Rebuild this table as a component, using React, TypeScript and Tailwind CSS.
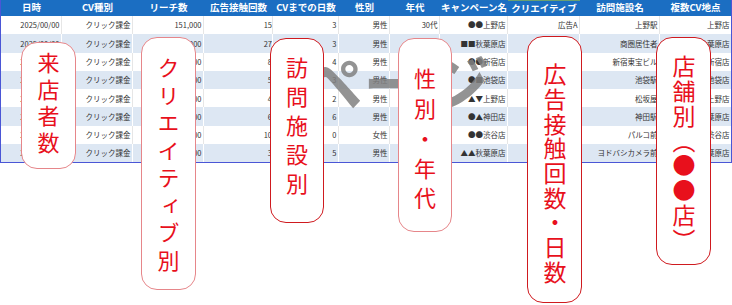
import React from "react";

const cols = [
  { w: "w-[61px]", label: "日時" },
  { w: "w-[71px]", label: "CV種別" },
  { w: "w-[71px]", label: "リーチ数" },
  { w: "w-[69px]", label: "広告接触回数" },
  { w: "w-[66px]", label: "CVまでの日数" },
  { w: "w-[51px]", label: "性別" },
  { w: "w-[50px]", label: "年代" },
  { w: "w-[68px]", label: "キャンペーン名" },
  { w: "w-[72px]", label: "クリエイティブ" },
  { w: "w-[80px]", label: "訪問施設名" },
  { w: "w-[71px]", label: "複数CV地点" },
];

const rows: string[][] = [
  ["2025/00/00", "クリック課金", "151,000", "15", "3", "男性", "30代", "●●上野店", "広告A", "上野駅", "上野店"],
  ["2025/00/00", "クリック課金", "120,000", "27", "3", "男性", "20代", "■■秋葉原店", "広告B", "商圏居住者", "秋葉原店"],
  ["2025/00/00", "クリック課金", "98,000", "8", "4", "男性", "40代", "●●新宿店", "広告A", "新宿東宝ビル", "新宿店"],
  ["2025/00/00", "クリック課金", "87,000", "5", "3", "男性", "30代", "●■池袋店", "広告C", "池袋駅", "池袋店"],
  ["2025/00/00", "クリック課金", "76,000", "4", "2", "男性", "50代", "▲▼上野店", "広告B", "松坂屋", "上野店"],
  ["2025/00/00", "クリック課金", "65,000", "6", "6", "男性", "20代", "●▲神田店", "広告A", "神田駅", "秋葉原店"],
  ["2025/00/00", "クリック課金", "54,000", "10", "0", "女性", "30代", "●●渋谷店", "広告C", "パルコ前", "渋谷店"],
  ["2025/00/00", "クリック課金", "43,000", "3", "5", "男性", "40代", "▲▲秋葉原店", "広告B", "ヨドバシカメラ前", "秋葉原店"],
];

type Callout = {
  text: string;
  box: string;
  border: string;
  pad: string;
  type: string;
};

const callouts: Callout[] = [
  { text: "来店者数", box: "left-[21px] top-[42px] w-[55px] h-[127px]", border: "border-[#e6868a]", pad: "pt-[8.5px]", type: "text-[22px] tracking-[4.5px]" },
  { text: "クリエイティブ別", box: "left-[141px] top-[37px] w-[55px] h-[253px]", border: "border-[#e6868a]", pad: "pt-[18.5px]", type: "text-[22px] tracking-[5.5px]" },
  { text: "訪問施設別", box: "left-[270px] top-[38px] w-[54px] h-[185px]", border: "border-[#cf1a1f]", pad: "pt-[18px]", type: "text-[22px] tracking-[7px]" },
  { text: "性別・年代", box: "left-[398px] top-[38px] w-[54px] h-[194px]", border: "border-[#e6868a]", pad: "pt-[28.5px]", type: "text-[22px] tracking-[7.75px]" },
  { text: "広告接触回数・日数", box: "left-[527px] top-[36px] w-[55px] h-[267px]", border: "border-[#cf1a1f]", pad: "pt-[26px]", type: "text-[23px] tracking-[1.7px]" },
  { text: "店舗別（●●店）", box: "left-[656px] top-[37px] w-[55px] h-[228px]", border: "border-[#cf1a1f]", pad: "pt-[17px]", type: "text-[23px] tracking-[1.8px]" },
];

export default function App() {
  return (
    <div className="relative w-[732px] h-[305px] bg-white overflow-hidden font-['Noto_Sans_CJK_JP','Noto_Sans',sans-serif]">
      <div className="flex w-[732px] flex-col border-x border-b border-[#4a56d6]">
        <div className="flex h-[16px] bg-[#1b6ec2]">
          {cols.map((c, i) => (
            <div
              key={i}
              className={`${c.w} shrink-0 flex items-center justify-center text-[9.5px] font-bold text-white leading-none ${i === 8 ? "border-t border-[#6aa070]" : ""}`}
            >
              {c.label}
            </div>
          ))}
        </div>
        {rows.map((r, ri) => (
          <div key={ri} className={`flex h-[18.3px] ${ri % 2 === 1 ? "bg-[#dde7f3]" : "bg-white"}`}>
            {r.map((v, ci) => (
              <div
                key={ci}
                className={`${cols[ci].w} shrink-0 flex items-center justify-end ${ci === 3 ? "pr-0" : "pr-[1.5px]"} text-[7.5px] text-[#333333] leading-none whitespace-nowrap overflow-hidden ${ci < 10 ? "border-r" : ""} ${ri % 2 === 1 ? "border-white" : "border-[#e6e6e6]"}`}
              >
                {v}
              </div>
            ))}
          </div>
        ))}
      </div>

      <div className="absolute left-[299px] top-[48px] text-[64px] font-bold leading-none text-[rgba(128,128,128,0.85)] whitespace-nowrap">
        ページ
      </div>

      {callouts.map((c, i) => (
        <div
          key={i}
          className={`absolute ${c.box} ${c.border} border-[1.5px] rounded-[16px] bg-white flex justify-center ${c.pad}`}
        >
          <div className={`[writing-mode:vertical-rl] leading-none text-[#e8101c] ${c.type}`}>{c.text}</div>
        </div>
      ))}
    </div>
  );
}
